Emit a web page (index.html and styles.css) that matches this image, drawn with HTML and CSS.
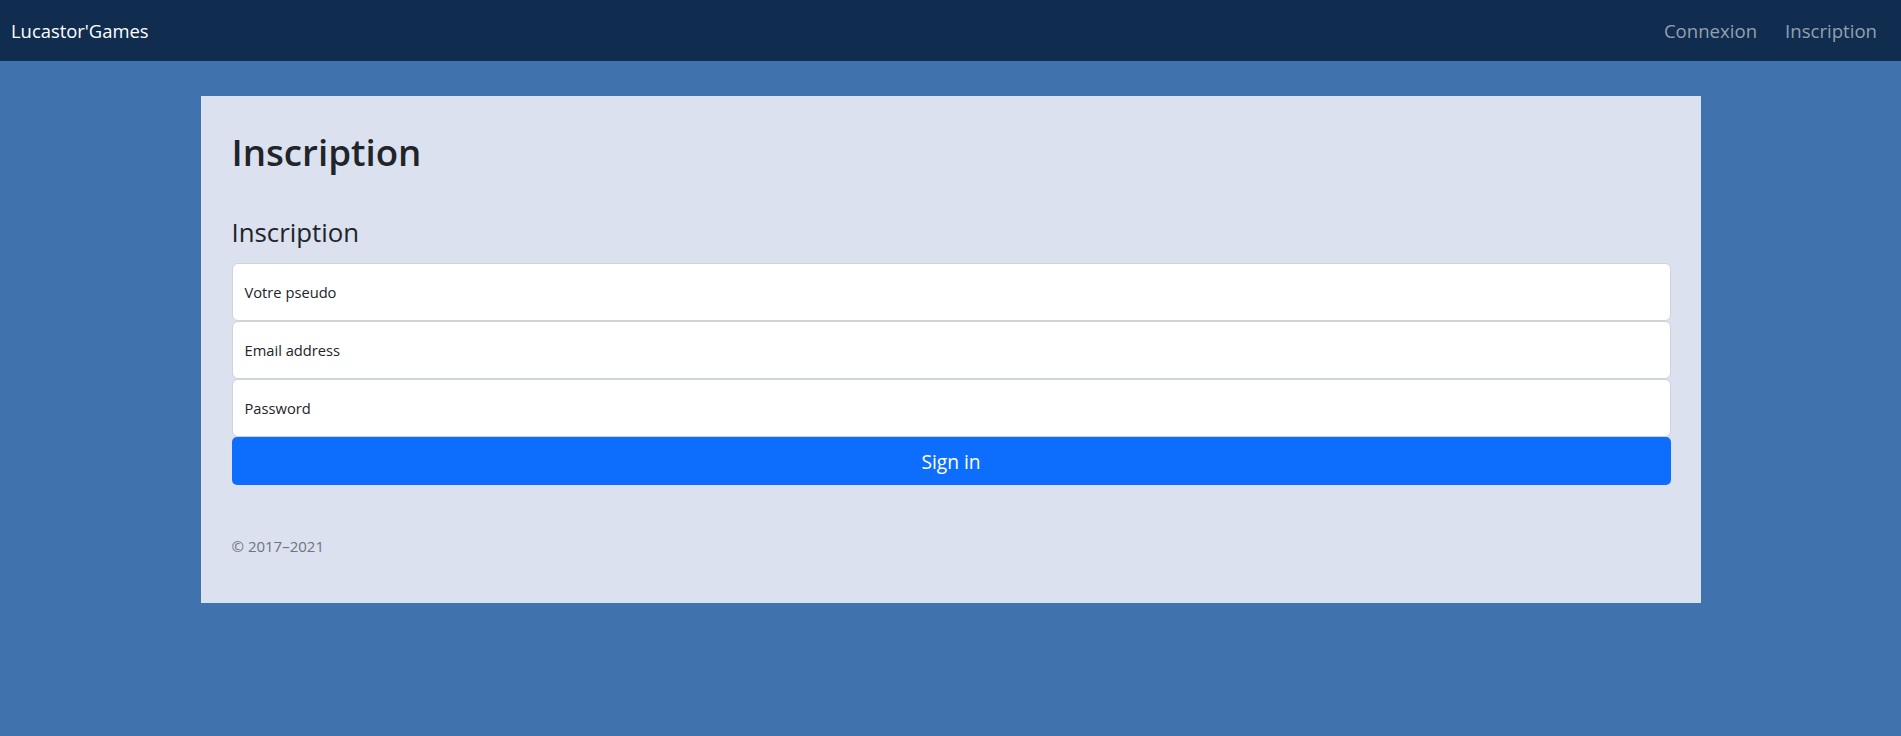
FILE: index.html
```html
<!DOCTYPE html>
<html lang="fr">
<head>
<meta charset="utf-8">
<title>Lucastor'Games - Inscription</title>
<link rel="stylesheet" href="styles.css">
</head>
<body>
<nav class="navbar">
  <a class="brand" href="#">Lucastor'Games</a>
  <ul class="nav-links">
    <li><a class="nav-link" href="#">Connexion</a></li>
    <li><a class="nav-link" href="#">Inscription</a></li>
  </ul>
</nav>
<main class="page">
  <section class="card">
    <h1 class="title">Inscription</h1>
    <form class="signup">
      <h2 class="form-title">Inscription</h2>
      <div class="field">
        <input class="field-input" type="text" id="pseudo">
        <label class="field-label" for="pseudo">Votre pseudo</label>
      </div>
      <div class="field">
        <input class="field-input" type="email" id="email">
        <label class="field-label" for="email">Email address</label>
      </div>
      <div class="field">
        <input class="field-input" type="password" id="password">
        <label class="field-label" for="password">Password</label>
      </div>
      <button class="submit" type="submit">Sign in</button>
      <p class="copyright">© 2017–2021</p>
    </form>
  </section>
</main>
</body>
</html>
```

FILE: styles.css
```css
* { box-sizing: border-box; }
html, body { margin: 0; padding: 0; }
body {
  background: #4072ae;
  font-family: "Open Sans", "Noto Sans", sans-serif;
  font-size: 15px;
  line-height: 24px;
  color: #212529;
  min-height: 736px;
}
.navbar {
  background: #102d4f;
  height: 61px;
  display: flex;
  align-items: center;
  justify-content: space-between;
  padding: 0 16px 0 11px;
}
.brand {
  color: #ffffff;
  text-decoration: none;
  font-size: 18.4px;
  line-height: 1.5;
}
.nav-links {
  list-style: none;
  margin: 0;
  padding: 0;
  display: flex;
  gap: 12px;
}
.nav-link {
  display: block;
  padding: 0 8px;
  color: rgb(147, 160, 175);
  text-decoration: none;
  font-size: 18.6px;
  line-height: 1.5;
}
.page {
  padding-top: 35px;
}
.card {
  width: 1500px;
  margin: 0 auto;
  background: #dbe1ee;
  padding: 32px 30px 30px 31px;
}
.title {
  margin: 0 0 39px;
  font-size: 36.7px;
  font-weight: 600;
  line-height: 48px;
}
.signup { margin: 0; }
.form-title {
  margin: 0 0 14px;
  font-size: 25.8px;
  font-weight: 400;
  line-height: 34px;
}
.field {
  position: relative;
  height: 58px;
}
.field-input {
  display: block;
  width: 100%;
  height: 58px;
  margin: 0;
  padding: 16px 12px;
  border: 1px solid #ced4da;
  border-radius: 6px;
  background: #ffffff;
  font: inherit;
}
.field-label {
  position: absolute;
  top: 0;
  left: 0;
  padding: 17px 13px 0;
  font-size: 14.7px;
  line-height: 24px;
  color: #212529;
  pointer-events: none;
}
.submit {
  display: block;
  width: 100%;
  height: 48px;
  padding: 10px 0 8px;
  border: 0;
  border-radius: 5px;
  background: #0d6efd;
  color: #ffffff;
  font-family: inherit;
  font-size: 19.2px;
  line-height: 30px;
  cursor: pointer;
}
.copyright {
  margin: 49px 0 15px;
  color: #6c757d;
}
```
